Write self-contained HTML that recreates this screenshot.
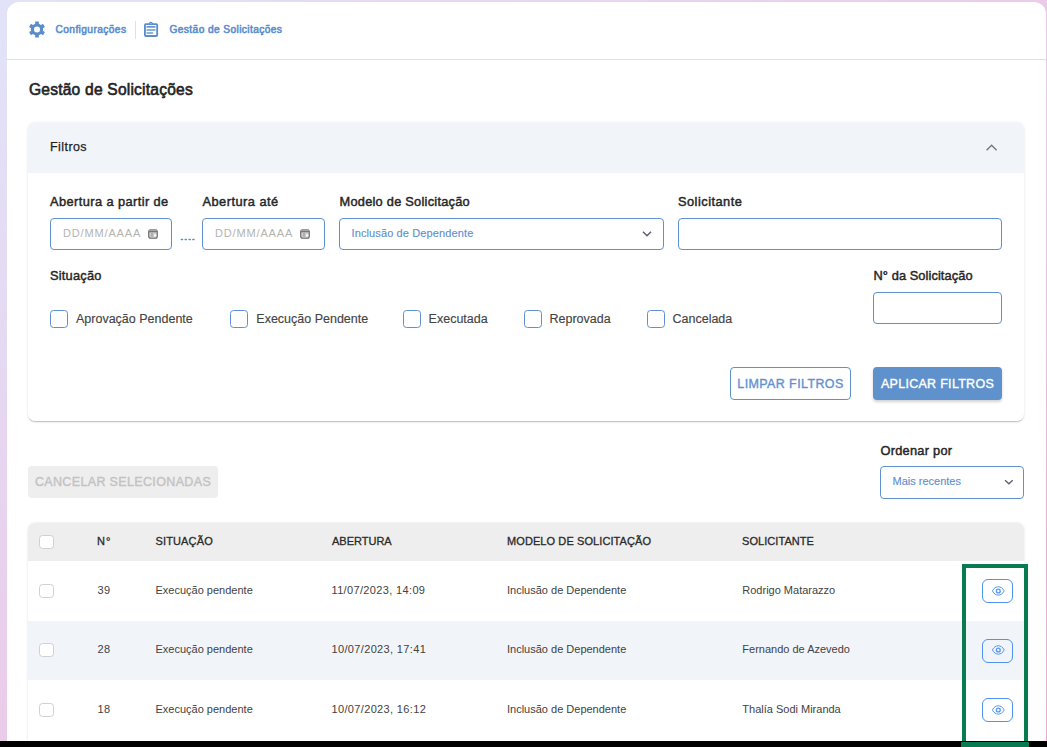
<!DOCTYPE html>
<html><head><meta charset="utf-8">
<style>
*{box-sizing:border-box;margin:0;padding:0}
html,body{width:1047px;height:747px;overflow:hidden}
body{font-family:"Liberation Sans",sans-serif;background:linear-gradient(to bottom right,#e1e3f8 0%,#e7d5f0 32%,#ebcae8 52%,#eeaad0 100%);position:relative;color:#333}
.abs{position:absolute}
#card{position:absolute;left:7px;top:2px;width:1039px;height:760px;background:#fff;border-radius:12px}
#bcline{position:absolute;left:7px;top:59px;width:1039px;height:1px;background:#e0e0e0}
.bc{position:absolute;font-size:10.2px;color:#5b8dcd;-webkit-text-stroke:0.55px #5b8dcd;white-space:nowrap}
#title{position:absolute;left:29px;top:80.5px;font-size:15.6px;letter-spacing:0.2px;color:#242424;-webkit-text-stroke:0.6px #242424;white-space:nowrap}
#panel{position:absolute;left:28px;top:122px;width:996px;height:299px;background:#fff;border-radius:7px;box-shadow:0 2px 1px -1px rgba(0,0,0,.12),0 1px 1px 0 rgba(0,0,0,.08),0 1px 3px 0 rgba(0,0,0,.10);overflow:hidden}
#phead{position:absolute;left:0;top:0;width:996px;height:51px;background:#f1f4f9}
.lbl{position:absolute;font-size:12.8px;color:#262626;-webkit-text-stroke:0.45px #262626;white-space:nowrap}
.inp{position:absolute;border:1.2px solid #5f91d1;border-radius:4px;background:#fff}
.ph{position:absolute;font-size:11px;color:#b3b3b3;white-space:nowrap}
.cb{position:absolute;width:18px;height:18px;border:1.3px solid #5f91d1;border-radius:3.5px;background:#fff}
.cbl{position:absolute;font-size:12.5px;color:#444;-webkit-text-stroke:0.15px #444;white-space:nowrap}
.btn{position:absolute;border-radius:4px;font-size:12.5px;-webkit-text-stroke:0.35px currentColor;white-space:nowrap;text-align:center}
.th{position:absolute;font-size:11px;color:#2a2a2a;-webkit-text-stroke:0.3px #2a2a2a;white-space:nowrap}
.td{position:absolute;font-size:11px;color:#424242;white-space:nowrap}
.num{letter-spacing:0.35px}
.tcb{position:absolute;width:14.5px;height:14px;border:1.3px solid #cdd0d6;border-radius:3.5px;background:#fff}
.eye{position:absolute;width:31px;height:24px;border:1.1px solid #4e92f2;border-radius:6px}
</style></head>
<body>
<div id="card"></div>
<div id="bcline"></div>
<!-- breadcrumb -->
<svg class="abs" style="left:29px;top:21.1px" width="16" height="17" viewBox="0 0 16 16.3"><g fill="#5b8dcd">
<circle cx="8" cy="8.15" r="6.1"/>
<rect x="6.15" y="0.05" width="3.70" height="8.10" rx="0.5"/>
<rect x="6.15" y="0.05" width="3.70" height="8.10" rx="0.5" transform="rotate(60 8 8.15)"/>
<rect x="6.15" y="0.05" width="3.70" height="8.10" rx="0.5" transform="rotate(120 8 8.15)"/>
<rect x="6.15" y="0.05" width="3.70" height="8.10" rx="0.5" transform="rotate(180 8 8.15)"/>
<rect x="6.15" y="0.05" width="3.70" height="8.10" rx="0.5" transform="rotate(240 8 8.15)"/>
<rect x="6.15" y="0.05" width="3.70" height="8.10" rx="0.5" transform="rotate(300 8 8.15)"/>
</g><circle cx="8" cy="8.15" r="3.05" fill="#fff"/></svg>
<div class="bc" style="left:55.5px;top:24px;letter-spacing:0.4px">Configurações</div>
<div class="abs" style="left:134.5px;top:21px;width:1px;height:18px;background:#e2e2e2"></div>
<svg class="abs" style="left:144px;top:21px" width="15" height="16" viewBox="0 0 15 16"><rect x="0.93" y="3.13" width="12.24" height="11.84" rx="1" fill="none" stroke="#5b8dcd" stroke-width="1.85"/><path d="M4.7 3.1 Q4.9 0.7 6.85 0.7 Q8.8 0.7 9 3.1Z" fill="#5b8dcd"/><rect x="6.2" y="2.3" width="1.3" height="0.8" fill="#fff" opacity=".6"/><path d="M3.1 5.9h7.8M3.1 9h7.8M3.1 12h5.5" stroke="#6a98d3" stroke-width="1.65" stroke-linecap="round"/></svg>
<div class="bc" style="left:169.5px;top:24px;letter-spacing:0.39px">Gestão de Solicitações</div>

<div id="title">Gestão de Solicitações</div>

<div id="panel">
  <div id="phead"></div>
  <div class="lbl" style="left:22px;top:18px;font-size:12.5px;color:#1e1e1e;-webkit-text-stroke:0.25px #1e1e1e;letter-spacing:0.43px">Filtros</div>
  <svg class="abs" style="left:958px;top:21px" width="12" height="8" viewBox="0 0 12 8"><path d="M0.6 7.2L5.6 2.3l5 4.9" fill="none" stroke="#7a7a7a" stroke-width="1.5"/></svg>
</div>
<!-- labels row 1 -->
<div class="lbl" style="left:50px;top:194px;letter-spacing:0.42px">Abertura a partir de</div>
<div class="lbl" style="left:202.5px;top:194px;letter-spacing:0.48px">Abertura até</div>
<div class="lbl" style="left:339.5px;top:194px;letter-spacing:0.25px">Modelo de Solicitação</div>
<div class="lbl" style="left:678px;top:194px;letter-spacing:0.48px">Solicitante</div>

<div class="inp" style="left:50px;top:218px;width:122px;height:32px"></div>
<div class="ph" style="left:63px;top:227px;letter-spacing:0.85px">DD/MM/AAAA</div>
<svg class="abs" style="left:148px;top:229px" width="10" height="10" viewBox="0 0 10 10"><rect x="0.7" y="0.9" width="8.6" height="8.4" rx="2" fill="#cdcdcd" stroke="#686868" stroke-width="1.1"/><rect x="1.3" y="0.5" width="7.4" height="1.6" fill="#a8a8a8"/><rect x="1.2" y="2.3" width="7.6" height="0.9" fill="#555"/><rect x="3.4" y="3.8" width="1.2" height="4" fill="#9a9a9a"/><rect x="6.2" y="5.4" width="2" height="1.9" fill="#fff"/></svg>
<svg class="abs" style="left:180px;top:238px" width="16" height="3" viewBox="0 0 16 3"><g fill="#5a8ed0"><rect x="0.6" y="0.8" width="2.6" height="1.4" rx="0.6"/><rect x="4.5" y="0.8" width="2.6" height="1.4" rx="0.6"/><rect x="8.4" y="0.8" width="2.6" height="1.4" rx="0.6"/><rect x="12.1" y="0.8" width="2.6" height="1.4" rx="0.6"/></g></svg>
<div class="inp" style="left:202px;top:218px;width:123px;height:32px"></div>
<div class="ph" style="left:215px;top:227px;letter-spacing:0.85px">DD/MM/AAAA</div>
<svg class="abs" style="left:300px;top:229px" width="10" height="10" viewBox="0 0 10 10"><rect x="0.7" y="0.9" width="8.6" height="8.4" rx="2" fill="#cdcdcd" stroke="#686868" stroke-width="1.1"/><rect x="1.3" y="0.5" width="7.4" height="1.6" fill="#a8a8a8"/><rect x="1.2" y="2.3" width="7.6" height="0.9" fill="#555"/><rect x="3.4" y="3.8" width="1.2" height="4" fill="#9a9a9a"/><rect x="6.2" y="5.4" width="2" height="1.9" fill="#fff"/></svg>

<div class="inp" style="left:339px;top:218px;width:325px;height:32px"></div>
<div class="ph" style="left:351.5px;top:226.8px;color:#5f91d1;letter-spacing:0.12px;-webkit-text-stroke:0.15px #5f91d1">Inclusão de Dependente</div>
<svg class="abs" style="left:642px;top:231px" width="10" height="6" viewBox="0 0 10 6"><path d="M1 0.8l4 4 4-4" fill="none" stroke="#5b6070" stroke-width="1.5"/></svg>

<div class="inp" style="left:678px;top:218px;width:324px;height:32px"></div>

<div class="lbl" style="left:50px;top:268px;letter-spacing:0.23px">Situação</div>
<div class="lbl" style="left:873.5px;top:268px;letter-spacing:0.09px">N° da Solicitação</div>
<div class="inp" style="left:873px;top:292px;width:129px;height:32px"></div>

<div class="cb" style="left:50px;top:310px"></div><div class="cbl" style="left:76px;top:311.5px">Aprovação Pendente</div>
<div class="cb" style="left:230px;top:310px"></div><div class="cbl" style="left:256.3px;top:311.5px">Execução Pendente</div>
<div class="cb" style="left:403.4px;top:310px"></div><div class="cbl" style="left:428.6px;top:311.5px">Executada</div>
<div class="cb" style="left:524px;top:310px"></div><div class="cbl" style="left:549.5px;top:311.5px">Reprovada</div>
<div class="cb" style="left:646.5px;top:310px"></div><div class="cbl" style="left:672.5px;top:311.5px">Cancelada</div>

<div class="btn" style="left:730px;top:367px;width:121px;height:33px;border:1.2px solid #5f91d1;color:#5f91d1;line-height:33px;letter-spacing:0.385px">LIMPAR FILTROS</div>
<div class="btn" style="left:873px;top:367px;width:129px;height:33px;background:#5f91cc;color:#fff;line-height:35px;box-shadow:0 2px 3px rgba(0,0,0,.18);letter-spacing:0.29px">APLICAR FILTROS</div>

<!-- list area -->
<div class="lbl" style="left:880.5px;top:443.3px;letter-spacing:0.26px">Ordenar por</div>
<div class="inp" style="left:880px;top:466px;width:144px;height:32.5px"></div>
<div class="ph" style="left:892.5px;top:474.9px;color:#5f91d1;-webkit-text-stroke:0.15px #5f91d1">Mais recentes</div>
<svg class="abs" style="left:1003.5px;top:479px" width="10" height="6" viewBox="0 0 10 6"><path d="M1.1 1.2l3.8 3.6 3.8-3.6" fill="none" stroke="#5b6070" stroke-width="1.3"/></svg>

<div class="btn" style="left:28px;top:466px;width:190px;height:32px;background:#eeeeee;color:#c2c2c2;line-height:32px;letter-spacing:0.35px">CANCELAR SELECIONADAS</div>

<!-- table -->
<div class="abs" style="left:28px;top:523px;width:996px;height:240px;background:#fff;border-radius:7px 7px 0 0;box-shadow:0 0 2.5px rgba(0,0,0,.13)"></div>
<div class="abs" style="left:28px;top:523px;width:996px;height:38px;background:#eeeeee;border-radius:7px 7px 0 0"></div>
<div class="abs" style="left:28px;top:621px;width:996px;height:59px;background:#f1f4f9"></div>
<div class="tcb" style="left:39.2px;top:535px"></div>
<div class="th" style="left:97px;top:535.3px;letter-spacing:1px">N°</div>
<div class="th" style="left:155.5px;top:535.3px;letter-spacing:0.14px">SITUAÇÃO</div>
<div class="th" style="left:332px;top:535.3px">ABERTURA</div>
<div class="th" style="left:507px;top:535.3px;letter-spacing:0.09px">MODELO DE SOLICITAÇÃO</div>
<div class="th" style="left:742px;top:535.3px;letter-spacing:0.06px">SOLICITANTE</div>

<div class="tcb" style="left:39.2px;top:584px"></div>
<div class="td num" style="left:97.5px;top:583.5px">39</div>
<div class="td" style="left:155.5px;top:583.5px">Execução pendente</div>
<div class="td num" style="left:331.5px;top:583.5px">11/07/2023, 14:09</div>
<div class="td" style="left:507px;top:583.5px">Inclusão de Dependente</div>
<div class="td" style="left:742.3px;top:583.5px">Rodrigo Matarazzo</div>

<div class="tcb" style="left:39.2px;top:643px"></div>
<div class="td num" style="left:97.5px;top:642.5px">28</div>
<div class="td" style="left:155.5px;top:642.5px">Execução pendente</div>
<div class="td num" style="left:331.5px;top:642.5px">10/07/2023, 17:41</div>
<div class="td" style="left:507px;top:642.5px">Inclusão de Dependente</div>
<div class="td" style="left:742.3px;top:642.5px">Fernando de Azevedo</div>

<div class="tcb" style="left:39.2px;top:703px"></div>
<div class="td num" style="left:97.5px;top:703px">18</div>
<div class="td" style="left:155.5px;top:703px">Execução pendente</div>
<div class="td num" style="left:331.5px;top:703px">10/07/2023, 16:12</div>
<div class="td" style="left:507px;top:703px">Inclusão de Dependente</div>
<div class="td" style="left:742.3px;top:703px">Thalía Sodi Miranda</div>

<!-- eye buttons -->
<div class="eye" style="left:982px;top:579px"></div>
<div class="eye" style="left:982px;top:638.5px"></div>
<div class="eye" style="left:982px;top:698px"></div>
<svg class="abs" style="left:991px;top:585px" width="15" height="12" viewBox="0 0 15 12"><path d="M1.4 5.95 C2.9 3 5 1.75 7.3 1.75 C9.6 1.75 11.7 3 13.2 5.95 C11.7 8.9 9.6 10.1 7.3 10.1 C5 10.1 2.9 8.9 1.4 5.95Z" fill="none" stroke="#5598f4" stroke-width="1"/><circle cx="7.3" cy="5.95" r="1.9" fill="none" stroke="#5598f4" stroke-width="1.35"/></svg>
<svg class="abs" style="left:991px;top:644px" width="15" height="12" viewBox="0 0 15 12"><path d="M1.4 5.95 C2.9 3 5 1.75 7.3 1.75 C9.6 1.75 11.7 3 13.2 5.95 C11.7 8.9 9.6 10.1 7.3 10.1 C5 10.1 2.9 8.9 1.4 5.95Z" fill="none" stroke="#5598f4" stroke-width="1"/><circle cx="7.3" cy="5.95" r="1.9" fill="none" stroke="#5598f4" stroke-width="1.35"/></svg>
<svg class="abs" style="left:991px;top:704px" width="15" height="12" viewBox="0 0 15 12"><path d="M1.4 5.95 C2.9 3 5 1.75 7.3 1.75 C9.6 1.75 11.7 3 13.2 5.95 C11.7 8.9 9.6 10.1 7.3 10.1 C5 10.1 2.9 8.9 1.4 5.95Z" fill="none" stroke="#5598f4" stroke-width="1"/><circle cx="7.3" cy="5.95" r="1.9" fill="none" stroke="#5598f4" stroke-width="1.35"/></svg>

<!-- green highlight box -->
<div class="abs" style="left:962px;top:564px;width:66px;height:200px;border:4px solid #087b50"></div>
<!-- bottom black bar -->
<div class="abs" style="left:0;top:741px;width:1047px;height:6px;background:#000"></div>
<div class="abs" style="left:961px;top:742px;width:68px;height:5px;background:#087b50"></div>
</body></html>
